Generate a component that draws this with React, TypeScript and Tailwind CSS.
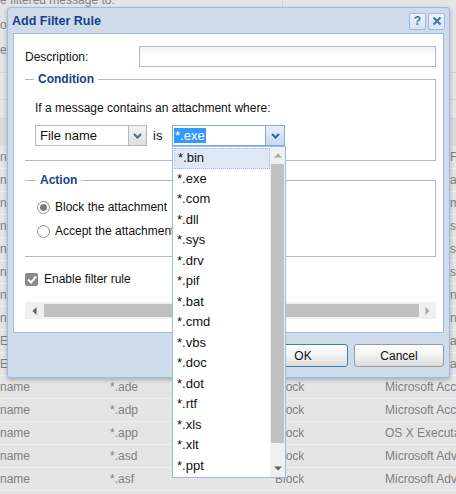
import React from 'react';

const font = "font-['Liberation_Sans',Arial,sans-serif]";

// rows behind the dialog only show their outer edges
const bgRows = [
  { a: 'name', b: '', c: '', d: 'Fi' },
  { a: 'name', b: '', c: '', d: 'al' },
  { a: 'name', b: '', c: '', d: 'm' },
  { a: 'name', b: '', c: '', d: 'ss' },
  { a: 'name', b: '', c: '', d: 'se' },
  { a: 'name', b: '', c: '', d: 'st' },
  { a: 'name', b: '', c: '', d: 'nt' },
  { a: 'name', b: '', c: '', d: 'nk' },
  { a: 'Ext', b: '', c: '', d: 'am' },
  { a: 'Ext', b: '', c: '', d: 'at' },
  { a: 'name', b: '*.ade', c: 'Block', d: 'Microsoft Access Project' },
  { a: 'name', b: '*.adp', c: 'Block', d: 'Microsoft Access Project' },
  { a: 'name', b: '*.app', c: 'Block', d: 'OS X Executable' },
  { a: 'name', b: '*.asd', c: 'Block', d: 'Microsoft Advanced' },
  { a: 'name', b: '*.asf', c: 'Block', d: 'Microsoft Advanced' },
];

const listItems = ['*.bin', '*.exe', '*.com', '*.dll', '*.sys', '*.drv', '*.pif', '*.bat', '*.cmd', '*.vbs', '*.doc', '*.dot', '*.rtf', '*.xls', '*.xlt', '*.ppt'];

const Chevron = ({ color }: { color: string }) => (
  <svg width="9" height="6" viewBox="0 0 9 6">
    <path d="M1 1 L4.5 4.5 L8 1" fill="none" stroke={color} strokeWidth="2" />
  </svg>
);

const Radio = ({ checked }: { checked?: boolean }) => (
  <span className="w-[13px] h-[13px] rounded-full border border-[#8e8e8e] bg-white flex items-center justify-center">
    {checked && <span className="w-[7px] h-[7px] rounded-full bg-[#7d7d7d]" />}
  </span>
);

const Background = () => (
  <div className="flex flex-col text-[12px] text-[#808080]">
    {/* top strip */}
    <div className="h-[8px] flex overflow-hidden">
      <span className="w-[283px] shrink-0 -mt-[7px] leading-[14px] border-r border-[#cfcfcf]">e filtered message to:</span>
    </div>
    <div className="h-[65px] border-b border-[#d4d4d4] flex flex-col pt-[10px] gap-[11px] leading-[14px]">
      <span>o</span>
      <span>e</span>
    </div>
    <div className="h-[27px] border-b border-[#d4d4d4]" />
    <div className="h-[18px]" />
    <div className="h-[28px] bg-[#dcdcdc] border-t border-[#c9d6e6]" />
    {bgRows.map((r, i) => (
      <div key={i} className="h-[23px] flex items-center border-b border-[#efefef] leading-[14px] whitespace-nowrap overflow-hidden">
        <span className="w-[110px] shrink-0">{r.a}</span>
        <span className="w-[165px] shrink-0">{r.b}</span>
        <span className="w-[110px] shrink-0">{r.c}</span>
        <span className={`shrink-0 ${r.b ? '' : 'pl-[65px]'}`}>{r.d}</span>
      </div>
    ))}
  </div>
);

export default function App() {
  return (
    <div className={`relative w-[456px] h-[494px] overflow-hidden bg-[#e5e5e5] ${font}`}>
      <Background />

      {/* dialog */}
      <div className="absolute left-[7px] top-[7px] w-[443px] h-[371px] flex flex-col border border-[#99bbe8] bg-[#cedbea] rounded-[3px] shadow-[0_2px_4px_rgba(0,0,0,0.25)]">
        {/* header */}
        <div className="h-[25px] flex items-center pl-[4px] pr-[4px]">
          <span className="text-[12.5px] font-bold text-[#15428b] leading-[16px] flex-1">Add Filter Rule</span>
          <div className="flex gap-[2px] mt-[1px]">
            <span className="w-[17px] h-[17px] rounded-[2px] border border-[#99bbe8] bg-gradient-to-b from-[#f0f5fb] to-[#d7e3f3] flex items-center justify-center text-[12px] font-bold text-[#3f6fae] leading-none">?</span>
            <span className="w-[17px] h-[17px] rounded-[2px] border border-[#99bbe8] bg-gradient-to-b from-[#f0f5fb] to-[#d7e3f3] flex items-center justify-center">
              <svg width="10" height="10" viewBox="0 0 10 10">
                <path d="M1.5 1.5 L8.5 8.5 M8.5 1.5 L1.5 8.5" stroke="#3f6fae" strokeWidth="2" />
              </svg>
            </span>
          </div>
        </div>

        {/* body */}
        <div className="mx-[5px] h-[300px] border border-[#99bbe8] bg-white flex flex-col pl-[11px] pr-[7px] pt-[12px] text-[12px] text-[#111] overflow-hidden">
          <div className="h-[21px] flex items-center">
            <span className="w-[114px] leading-[14px]">Description:</span>
            <div className="flex-1 h-[21px] border border-[#b5b8c8] bg-gradient-to-b from-[#f3f3f3] to-white via-white" />
          </div>

          <fieldset className="mt-[5px] border-t border-r border-b border-[#b5b8c8] pl-[10px] pb-[14px]">
            <legend className="ml-[-1px] px-[4px] text-[12px] font-bold text-[#15428b] leading-[14px]">Condition</legend>
            <div className="pt-[15px] leading-[14px]">If a message contains an attachment where:</div>
            <div className="mt-[10px] h-[21px] flex items-center">
              <div className="w-[112px] h-[21px] flex border border-[#b5b8c8]">
                <span className="flex-1 pl-[4px] flex items-center text-[13px] leading-[14px]">File name</span>
                <span className="w-[18px] border-l border-[#b5b8c8] bg-gradient-to-b from-[#f4f4f4] to-[#dcdcdc] flex items-center justify-center">
                  <Chevron color="#4a6a90" />
                </span>
              </div>
              <span className="ml-[6px] w-[19px] text-[13px] leading-[14px]">is</span>
              <div className="w-[113px] h-[21px] flex border border-[#7eadd9]">
                <span className="flex-1 pl-[1px] flex items-center">
                  <span className="bg-[#3399ff] text-white text-[13px] leading-[15px] px-[1px]">*.exe</span>
                </span>
                <span className="w-[19px] border-l border-[#7eadd9] bg-gradient-to-b from-[#e6eefa] to-[#c6d8f0] flex items-center justify-center">
                  <Chevron color="#3a5f92" />
                </span>
              </div>
            </div>
          </fieldset>

          <fieldset className="mt-[12px] border-t border-r border-b border-[#b5b8c8] pl-[12px] pb-[17px]">
            <legend className="ml-[-1px] px-[4px] text-[12px] font-bold text-[#15428b] leading-[14px]">Action</legend>
            <div className="pt-[12px] flex flex-col gap-[8px]">
              <div className="h-[16px] flex items-center gap-[5px]">
                <Radio checked />
                <span className="leading-[14px]">Block the attachment</span>
              </div>
              <div className="h-[16px] flex items-center gap-[5px]">
                <Radio />
                <span className="leading-[14px]">Accept the attachment</span>
              </div>
            </div>
          </fieldset>

          <div className="mt-[14px] h-[16px] flex items-center gap-[6px]">
            <span className="w-[13px] h-[13px] rounded-[2px] bg-[#8a8a8a] flex items-center justify-center">
              <svg width="10" height="9" viewBox="0 0 10 9">
                <path d="M1 4.5 L4 7.5 L9 1.5" fill="none" stroke="white" strokeWidth="2" />
              </svg>
            </span>
            <span className="leading-[14px]">Enable filter rule</span>
          </div>

          {/* horizontal scrollbar */}
          <div className="mt-[15px] h-[17px] flex items-center bg-[#f0f0f0]">
            <span className="w-[19px] flex items-center justify-center">
              <svg width="5" height="8" viewBox="0 0 5 8"><path d="M4.5 0 L0.5 4 L4.5 8 Z" fill="#606060" /></svg>
            </span>
            <span className="flex-1 h-[13px] bg-[#c1c1c1]" />
            <span className="w-[17px] flex items-center justify-center">
              <svg width="5" height="8" viewBox="0 0 5 8"><path d="M0.5 0 L4.5 4 L0.5 8 Z" fill="#a8a8a8" /></svg>
            </span>
          </div>
        </div>

        {/* buttons */}
        <div className="mt-[11px] mr-[5px] flex justify-end gap-[6px] text-[12px] text-[#111]">
          <button className="w-[90px] h-[23px] rounded-[3px] border border-[#3c7fb1] bg-gradient-to-b from-white via-[#f2f2f2] to-[#dcdcdc] leading-[14px]">OK</button>
          <button className="w-[90px] h-[23px] rounded-[3px] border border-[#9a9a9a] bg-gradient-to-b from-white via-[#f2f2f2] to-[#dcdcdc] leading-[14px]">Cancel</button>
        </div>
      </div>

      {/* dropdown list */}
      <div className="absolute left-[172px] top-[146px] w-[114px] h-[332px] border border-[#99bbe8] bg-white flex text-[13px] text-[#111]">
        <div className="flex-1 flex flex-col pt-[1px] pl-[1px]">
          {listItems.map((it, i) => (
            <div
              key={it}
              className={`h-[20.5px] flex items-center pl-[3px] leading-[14px] ${i === 0 ? 'bg-[#dfe8f6] border border-dotted border-[#a3bae9] pl-[2px]' : ''}`}
            >
              {it}
            </div>
          ))}
        </div>
        <div className="w-[15px] flex flex-col bg-[#f0f0f0]">
          <span className="h-[17px] flex items-center justify-center">
            <svg width="8" height="5" viewBox="0 0 8 5"><path d="M0 4.5 L4 0.5 L8 4.5 Z" fill="#a8a8a8" /></svg>
          </span>
          <span className="h-[279px] mx-[1px] bg-[#c1c1c1]" />
          <span className="flex-1" />
          <span className="h-[17px] flex items-center justify-center">
            <svg width="8" height="5" viewBox="0 0 8 5"><path d="M0 0.5 L4 4.5 L8 0.5 Z" fill="#606060" /></svg>
          </span>
        </div>
      </div>
    </div>
  );
}
